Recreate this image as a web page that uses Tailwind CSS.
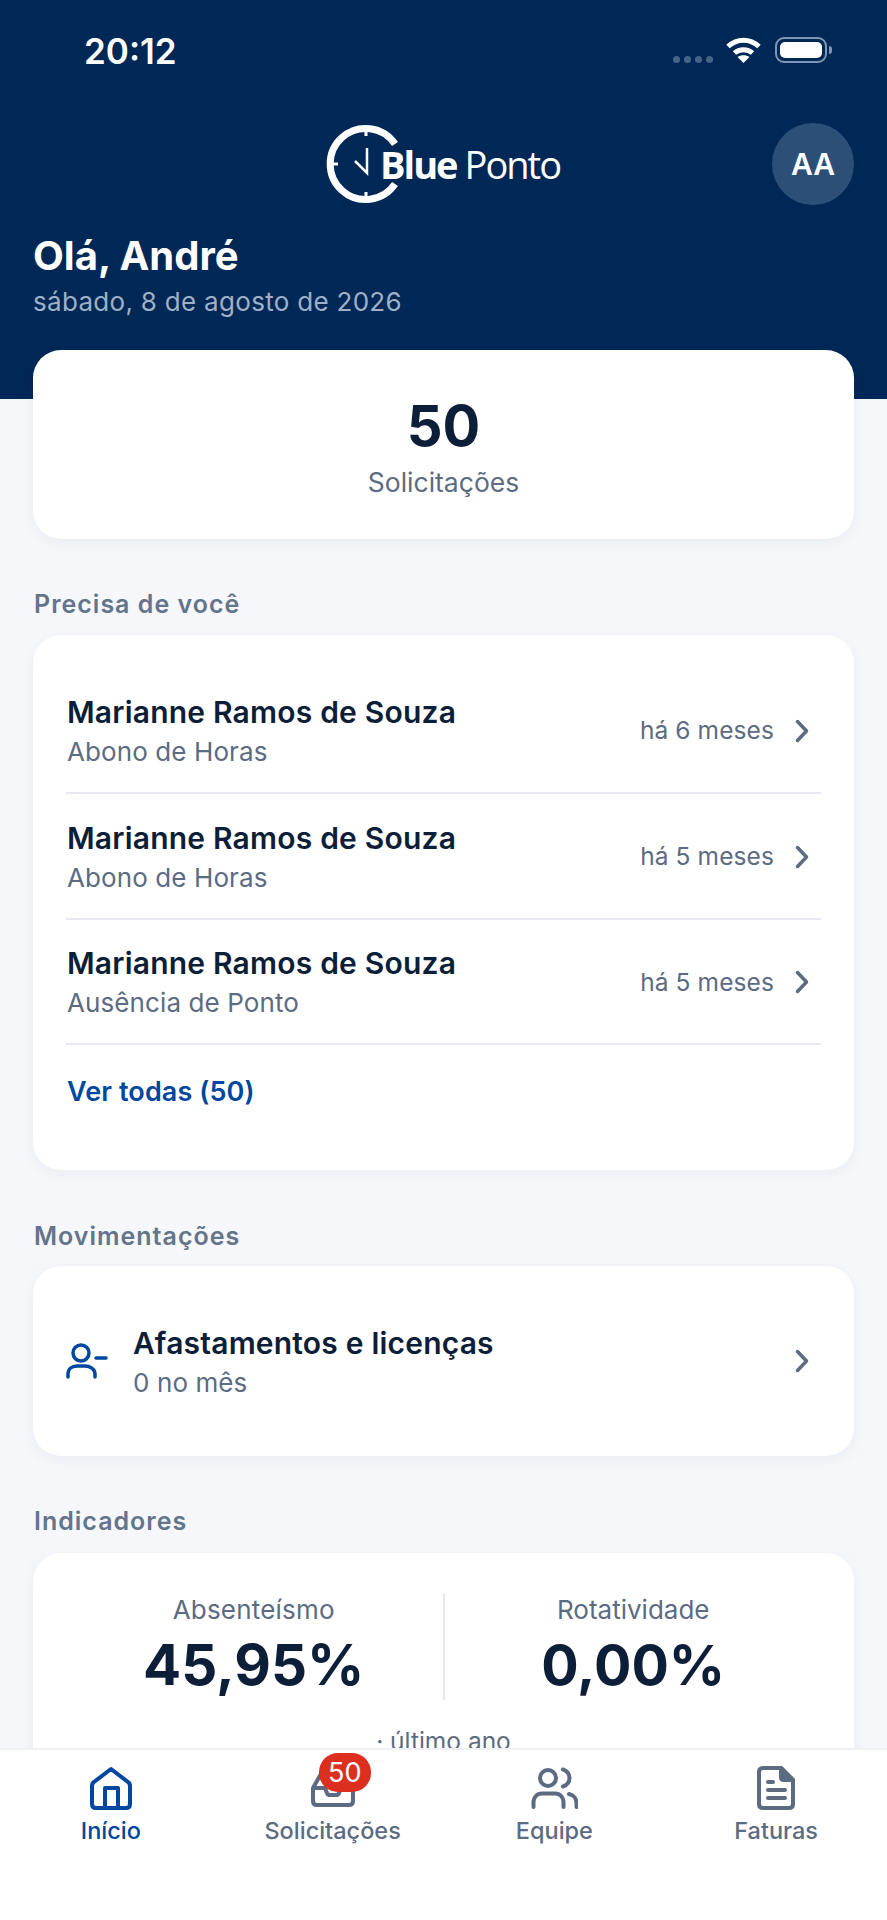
<!DOCTYPE html>
<html lang="pt-BR">
<head>
  <meta charset="UTF-8" />
  <meta name="viewport" content="width=device-width, initial-scale=1.0"/>
  <title>Blue Ponto</title>
  <script src="https://cdn.jsdelivr.net/npm/@tailwindcss/browser@4"></script>
</head>
<body class="bg-[#f5f7fb] font-['Inter',sans-serif]">
  <div class="w-[887px] h-[1920px] flex flex-col overflow-hidden">
    <div class="flex-1 overflow-hidden">
      <!-- header -->
      <header class="bg-[#002856] h-[399px] px-[33px] text-white">
        <div class="h-[123px] pt-[31px] flex justify-between">
          <span class="ml-[51px] text-[35px] leading-[40px] font-semibold">20:12</span>
          <div class="flex items-start pt-[6px] mr-[22px]">
            <div class="flex gap-[4px] mt-[19px] mr-[13px]">
              <span class="w-[7px] h-[7px] rounded-full bg-[#46648a]"></span>
              <span class="w-[7px] h-[7px] rounded-full bg-[#46648a]"></span>
              <span class="w-[7px] h-[7px] rounded-full bg-[#46648a]"></span>
              <span class="w-[7px] h-[7px] rounded-full bg-[#46648a]"></span>
            </div>
            <svg class="w-[35px] h-[26px]" viewBox="0 0 35 26" fill="none" stroke="white" stroke-width="5">
              <path d="M2 9.5C11 1 24 1 33 9.5"/>
              <path d="M8.5 16C13.5 11.5 21.5 11.5 26.5 16"/>
              <path d="M17.5 26L11.5 20C15 17.5 20 17.5 23.5 20Z" fill="white" stroke="none"/>
            </svg>
            <div class="ml-[14px] flex items-center">
              <div class="w-[52px] h-[26px] rounded-[9px] border-[2px] border-[#7f95b3] p-[3px]">
                <div class="w-full h-full rounded-[5px] bg-white"></div>
              </div>
              <span class="ml-[2px] w-[3px] h-[8px] rounded-r-full bg-[#7f95b3]"></span>
            </div>
          </div>
        </div>
        <div class="grid grid-cols-[82px_1fr_82px] items-center h-[82px]">
          <div></div>
          <div class="flex items-center justify-center pr-[1px]">
            <svg class="w-[80px] h-[80px] -mr-[26px]" viewBox="0 0 80 80" fill="none" stroke="white">
              <path d="M69 20A35.500 35.500 0 1 0 69 60" stroke-width="7"/>
              <path d="M40 4V12M40 68V76M4 40H12" stroke-width="3"/>
              <path d="M41 24V49L29 37" stroke-width="2.500"/>
            </svg>
            <span class="font-['Open_Sans',sans-serif] text-[38px] leading-[40px] tracking-[-2px] font-bold">Blue</span>
            <span class="font-['Open_Sans',sans-serif] text-[38px] leading-[40px] tracking-[-2px] font-normal ml-[8px]">Ponto</span>
          </div>
          <div class="w-[82px] h-[82px] rounded-full bg-[#2c4f78] flex items-center justify-center text-[30px] font-semibold">AA</div>
        </div>
        <h1 class="mt-[27px] text-[40px] leading-[48px] font-bold">Olá, André</h1>
        <p class="mt-[5px] text-[26px] leading-[34px] text-[#9fb0c7] tracking-[0.3px]">sábado, 8 de agosto de 2026</p>
      </header>

      <main class="px-[33px]">
        <section class="-mt-[49px] relative h-[189px] bg-white rounded-[28px] shadow-[0_4px_16px_rgba(15,31,58,0.05)] flex flex-col items-center pt-[43px]">
          <div class="text-[56px] leading-[66px] font-bold text-[#0c1e38]">50</div>
          <div class="mt-[6px] text-[26.500px] leading-[34px] text-[#5d6b82]">Solicitações</div>
        </section>

        <h2 class="mt-[50px] pl-[1px] text-[25px] leading-[30px] font-semibold tracking-[1px] text-[#64748b]">Precisa de você</h2>
        <section class="mt-[16px] h-[535px] bg-white rounded-[28px] shadow-[0_4px_16px_rgba(15,31,58,0.05)] px-[33px] pt-[33px]">
          <div class="h-[126px] border-b-2 border-[#e6eaf0] flex items-center justify-between pt-[3px]">
            <div class="pl-[1px]">
              <div class="text-[30px] leading-[39px] font-semibold tracking-[0.2px] text-[#0c1e38]">Marianne Ramos de Souza</div>
              <div class="text-[26px] leading-[39px] tracking-[0.1px] text-[#5d6b82]">Abono de Horas</div>
            </div>
            <div class="flex items-center gap-[20px] mr-[11px] pb-[2px]">
              <span class="text-[24.500px] text-[#5d6b82] tracking-[0.1px]">há 6 meses</span>
              <svg class="w-[16px] h-[26px]" viewBox="0 0 16 26" fill="none" stroke="#5d6b82" stroke-width="3.500" stroke-linecap="round" stroke-linejoin="round"><path d="M3.500 3.500L12.500 13L3.500 22.500"/></svg>
            </div>
          </div>
          <div class="h-[126px] border-b-2 border-[#e6eaf0] flex items-center justify-between pt-[3px]">
            <div class="pl-[1px]">
              <div class="text-[30px] leading-[39px] font-semibold tracking-[0.2px] text-[#0c1e38]">Marianne Ramos de Souza</div>
              <div class="text-[26px] leading-[39px] tracking-[0.1px] text-[#5d6b82]">Abono de Horas</div>
            </div>
            <div class="flex items-center gap-[20px] mr-[11px] pb-[2px]">
              <span class="text-[24.500px] text-[#5d6b82] tracking-[0.1px]">há 5 meses</span>
              <svg class="w-[16px] h-[26px]" viewBox="0 0 16 26" fill="none" stroke="#5d6b82" stroke-width="3.500" stroke-linecap="round" stroke-linejoin="round"><path d="M3.500 3.500L12.500 13L3.500 22.500"/></svg>
            </div>
          </div>
          <div class="h-[125px] border-b-2 border-[#e6eaf0] flex items-center justify-between pt-[3px]">
            <div class="pl-[1px]">
              <div class="text-[30px] leading-[39px] font-semibold tracking-[0.2px] text-[#0c1e38]">Marianne Ramos de Souza</div>
              <div class="text-[26px] leading-[39px] tracking-[0.1px] text-[#5d6b82]">Ausência de Ponto</div>
            </div>
            <div class="flex items-center gap-[20px] mr-[11px] pb-[2px]">
              <span class="text-[24.500px] text-[#5d6b82] tracking-[0.1px]">há 5 meses</span>
              <svg class="w-[16px] h-[26px]" viewBox="0 0 16 26" fill="none" stroke="#5d6b82" stroke-width="3.500" stroke-linecap="round" stroke-linejoin="round"><path d="M3.500 3.500L12.500 13L3.500 22.500"/></svg>
            </div>
          </div>
          <div class="mt-[30px] pl-[1px] text-[27px] leading-[34px] font-semibold tracking-[0.1px] text-[#0047a0]">Ver todas (50)</div>
        </section>

        <h2 class="mt-[51px] pl-[1px] text-[25px] leading-[30px] font-semibold tracking-[1px] text-[#64748b]">Movimentações</h2>
        <section class="mt-[15px] h-[190px] bg-white rounded-[28px] shadow-[0_4px_16px_rgba(15,31,58,0.05)] px-[33px] flex items-center justify-between">
          <div class="flex items-center gap-[25px]">
            <svg class="w-[42px] h-[36px]" viewBox="0 0 42 36" fill="none" stroke="#0047a0" stroke-width="3.500" stroke-linecap="round">
              <circle cx="15" cy="10" r="8"/>
              <path d="M2 34V31C2 26 6 23 11 23H19C24 23 29 26 29 31V34"/>
              <path d="M30 15H40"/>
            </svg>
            <div class="pt-[4px]">
              <div class="text-[30px] leading-[39px] font-semibold tracking-[0.2px] text-[#0c1e38]">Afastamentos e licenças</div>
              <div class="text-[26px] leading-[39px] tracking-[0.1px] text-[#5d6b82]">0 no mês</div>
            </div>
          </div>
          <svg class="w-[16px] h-[26px] mr-[11px]" viewBox="0 0 16 26" fill="none" stroke="#5d6b82" stroke-width="3.500" stroke-linecap="round" stroke-linejoin="round"><path d="M3.500 3.500L12.500 13L3.500 22.500"/></svg>
        </section>

        <h2 class="mt-[50px] pl-[1px] text-[25px] leading-[30px] font-semibold tracking-[1px] text-[#64748b]">Indicadores</h2>
        <section class="mt-[17px] h-[260px] bg-white rounded-t-[28px] shadow-[0_4px_16px_rgba(15,31,58,0.05)] pt-[41px]">
          <div class="grid grid-cols-2 pl-[32px] pr-[30px]">
            <div class="flex flex-col items-center h-[106px] border-r-2 border-[#e6eaf0]">
              <div class="text-[26px] leading-[32px] tracking-[0.2px] text-[#5d6b82]">Absenteísmo</div>
              <div class="mt-[7px] text-[56.500px] leading-[64px] font-bold text-[#0c1e38]">45,95%</div>
            </div>
            <div class="flex flex-col items-center h-[106px] pr-[2px]">
              <div class="text-[26px] leading-[32px] text-[#5d6b82]">Rotatividade</div>
              <div class="mt-[7px] text-[55.500px] leading-[64px] font-bold text-[#0c1e38]">0,00%</div>
            </div>
          </div>
          <div class="mt-[26px] text-center text-[24.500px] leading-[30px] text-[#5d6b82]">· último ano</div>
        </section>
      </main>
    </div>

    <!-- bottom nav -->
    <nav class="relative h-[172px] bg-white border-t-2 border-[#eef0f4] grid grid-cols-4 pt-[16px]">
      <div class="flex flex-col items-center">
        <svg class="w-[42px] h-[44px]" viewBox="0 0 42 44" fill="none" stroke="#0047a0" stroke-width="4" stroke-linejoin="round">
          <path d="M21 3L38 16C39.500 17 40 18 40 20V38C40 40.500 38.500 42 36 42H6C3.500 42 2 40.500 2 38V20C2 18 2.500 17 4 16Z"/>
          <path d="M15 42V22H28V42"/>
        </svg>
        <span class="mt-[6px] text-[23.500px] leading-[30px] font-medium text-[#0047a0]">Início</span>
      </div>
      <div class="relative flex flex-col items-center">
        <svg class="w-[44px] h-[44px]" viewBox="0 0 44 44" fill="none" stroke="#5d6b82" stroke-width="4" stroke-linejoin="round">
          <path d="M11 6H33L42 22V35C42 37.500 40.500 39 38 39H6C3.500 39 2 37.500 2 35V22Z"/>
          <path d="M2 22H14L16 27C16.500 28.500 17.500 29 19 29H25C26.500 29 27.500 28.500 28 27L30 22H42"/>
        </svg>
        <span class="mt-[6px] text-[23.500px] leading-[30px] font-medium text-[#5d6b82]">Solicitações</span>
        <span class="absolute left-[97px] top-[-13px] w-[52px] h-[39px] rounded-[19px] bg-[#dc2f1f] text-white text-[27px] leading-[39px] text-center">50</span>
      </div>
      <div class="flex flex-col items-center">
        <svg class="w-[48px] h-[44px]" viewBox="0 0 48 44" fill="none" stroke="#5d6b82" stroke-width="4" stroke-linecap="round">
          <circle cx="18" cy="12" r="8"/>
          <path d="M3.500 41V37C3.500 31 7 27.500 12 27.500H25C30 27.500 33.500 31 33.500 37V41"/>
          <path d="M33 3.500C37.500 5 39.500 8.500 39.500 12C39.500 15.500 37.500 19 33 20.500"/>
          <path d="M39 28C44 29 46.500 33 46.500 37V41"/>
        </svg>
        <span class="mt-[6px] text-[23.500px] leading-[30px] font-medium text-[#5d6b82]">Equipe</span>
      </div>
      <div class="flex flex-col items-center">
        <svg class="w-[38px] h-[44px]" viewBox="0 0 38 44" fill="none" stroke="#5d6b82" stroke-width="4" stroke-linecap="round" stroke-linejoin="round">
          <path d="M24 2H6C3.500 2 2 3.500 2 6V38C2 40.500 3.500 42 6 42H32C34.500 42 36 40.500 36 38V14Z"/>
          <path d="M24 2L36 14H26C25 14 24 13 24 12Z" fill="#5d6b82"/>
          <path d="M11 16H16M11 24H28M11 32H28"/>
        </svg>
        <span class="mt-[6px] text-[23.500px] leading-[30px] font-medium text-[#5d6b82]">Faturas</span>
      </div>
    </nav>
  </div>
</body>
</html>
